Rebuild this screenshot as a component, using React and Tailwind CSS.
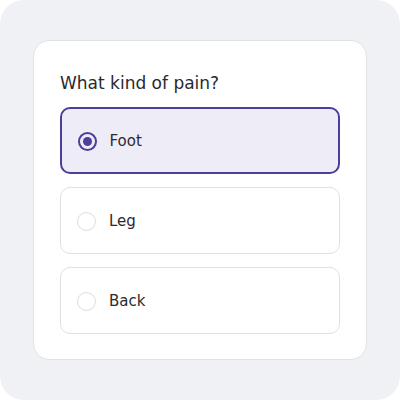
import React, { useState } from 'react';

const options = ['Foot', 'Leg', 'Back'];

const App = () => {
    const [selected, setSelected] = useState('Foot');

    return (
        <div className="w-[400px] h-[400px] bg-[#f0f1f5] rounded-[24px] flex items-center justify-center" style={{ fontFamily: '"DejaVu Sans", sans-serif' }}>
            <div className="w-[334px] bg-white border border-[#e1e2e8] rounded-[16px] px-[26px] pt-[29px] pb-[25px]">
                <h2 className="text-[17px] leading-[26px] text-[#2a2a30] mb-[11px]">What kind of pain?</h2>
                <div className="flex flex-col gap-[13px]">
                    {options.map(opt => {
                        const active = opt === selected;
                        return (
                            <button key={opt} onClick={() => setSelected(opt)}
                                className={`h-[67px] w-full flex items-center gap-[13px] pt-[2px] rounded-[10px] text-left ${active ? 'bg-[#eeecf7] border-2 border-[#4b3f9b] px-[15.5px]' : 'bg-white border-[1.5px] border-[#dfe0e6] px-[16px]'}`}>
                                <span className={`w-[19px] h-[19px] rounded-full flex items-center justify-center shrink-0 ${active ? 'border-2 border-[#4b3f9b]' : 'border-[1.5px] border-[#dcdde3]'}`}>
                                    {active && <span className="w-[9px] h-[9px] rounded-full bg-[#4b3f9b]" />}
                                </span>
                                <span className="text-[15px] text-[#2a2a30]">{opt}</span>
                            </button>
                        );
                    })}
                </div>
            </div>
        </div>
    );
};

export default App;
